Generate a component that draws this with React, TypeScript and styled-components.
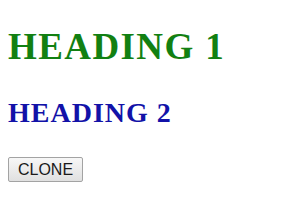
import styled, { createGlobalStyle } from "styled-components";

const GlobalStyle = createGlobalStyle`
  body {
    margin: 0;
    padding: 8px;
    background: #ffffff;
    font-family: "Liberation Serif", "Times New Roman", serif;
  }
`;

const Heading = styled.h1`
  margin: 18px 0 0;
  font-size: 37px;
  line-height: 41px;
  letter-spacing: 1.4px;
  font-weight: 700;
  color: #128012;
`;

const SubHeading = styled.h2`
  margin: 30px 0 29px;
  font-size: 28px;
  line-height: 31px;
  letter-spacing: 1px;
  font-weight: 700;
  color: #1212a8;
`;

const CloneButton = styled.button`
  display: block;
  width: 75px;
  height: 25px;
  margin: 0;
  padding: 0;
  border: 1px solid #a3a3a3;
  border-radius: 2px;
  background: linear-gradient(#f7f7f7, #e0e0e0);
  font-family: "Liberation Sans", Arial, sans-serif;
  font-size: 16px;
  color: #1a1a1a;
`;

const App = () => {
  return (
    <>
      <GlobalStyle />
      <Heading>HEADING 1</Heading>
      <SubHeading>HEADING 2</SubHeading>
      <CloneButton>CLONE</CloneButton>
    </>
  );
};

export default App;
